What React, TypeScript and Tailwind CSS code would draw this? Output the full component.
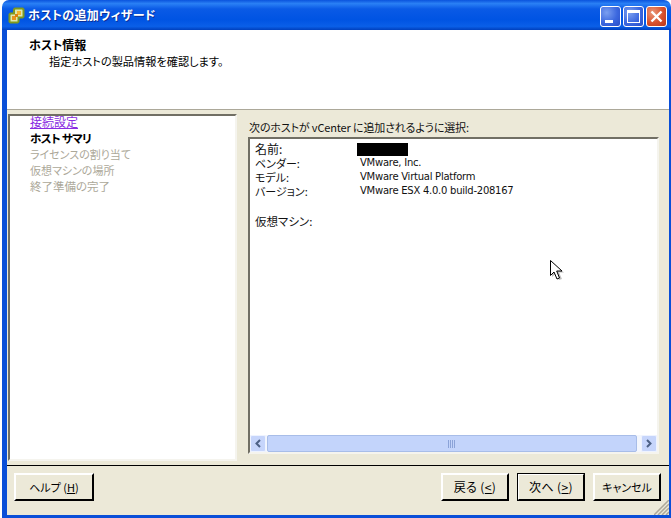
import React from "react";

const jp = "font-['Tahoma','Noto_Sans_CJK_JP',sans-serif] [font-feature-settings:'palt']";

function WinBtn({ kind }: { kind: "min" | "max" | "close" }) {
  const bg =
    kind === "close"
      ? "bg-[radial-gradient(circle_at_30%_30%,#e9987a,#d9512c_55%,#b8361a)]"
      : "bg-[radial-gradient(circle_at_30%_30%,#7b9ff0,#3c68df_55%,#2a4fc8)]";
  return (
    <div className={`w-[21px] h-[21px] rounded-[3px] border border-white flex items-center justify-center ${bg}`}>
      {kind === "min" && <div className="w-[8px] h-[3px] bg-white mt-[9px] mr-[4px]" />}
      {kind === "max" && <div className="w-[13px] h-[13px] border border-white border-t-[3px]" />}
      {kind === "close" && (
        <svg width="13" height="13" viewBox="0 0 13 13">
          <path d="M1.5 1.5 11.5 11.5M11.5 1.5 1.5 11.5" stroke="#fff" strokeWidth="2.4" />
        </svg>
      )}
    </div>
  );
}

function Btn({ w, def, text = "text-[12px]", children }: { w: string; def?: boolean; text?: string; children: React.ReactNode }) {
  return (
    <div
      className={`${w} ${text} h-[28px] flex items-center justify-center bg-[#ece9d8] text-black border-t-2 border-l-2 border-t-white border-l-white border-r-2 border-b-2 border-r-black border-b-black ${
        def ? "outline outline-1 outline-black -outline-offset-1" : ""
      }`}
    >
      {children}
    </div>
  );
}

const U = ({ children }: { children: React.ReactNode }) => <span className="underline">{children}</span>;

function Row({ k, size = "text-[11px]", children }: { k: string; size?: string; children?: React.ReactNode }) {
  return (
    <div className="flex h-[14px] items-center">
      <div className={`w-[105px] ${size} leading-[14px] text-[#111]`}>{k}</div>
      <div className="text-[10px] leading-[14px] tracking-[-0.25px] font-['DejaVu_Sans',sans-serif] text-[#111]">{children}</div>
    </div>
  );
}

export default function App() {
  return (
    <div className={`w-[671px] h-[518px] overflow-hidden bg-white flex flex-col ${jp}`}>
      {/* title bar */}
      <div className="h-[30px] ml-[2px] rounded-t-[7px] bg-[linear-gradient(180deg,#0a53dd_0%,#2a80f5_12%,#0a5ae6_30%,#0054e3_65%,#0a5fe8_88%,#0040bd_100%)] flex items-center pl-[6px] pr-[4px]">
        <svg width="17" height="17" viewBox="0 0 17 17" className="shrink-0">
          <path d="M7 1.5H14.5L15.5 2.5V9.5L14.5 10.5H10.5V14.5L9.5 15.5H2.5L1.5 14.5V7.5L2.5 6.5H6V2.5Z" fill="#dfe8b0" stroke="#7f9a1e" strokeWidth="2" />
          <rect x="9" y="4" width="4" height="4" fill="#f3b52e" />
          <rect x="4" y="9" width="4" height="4" fill="#e8951c" />
          <rect x="7" y="7" width="3" height="3" fill="#d67f12" />
        </svg>
        <div className="ml-[3px] text-[12px] tracking-[0.3px] font-bold text-white [text-shadow:1px_1px_0_#0a2f9a]">ホストの追加ウィザード</div>
        <div className="ml-auto mt-[3px] flex gap-[2px]">
          <WinBtn kind="min" />
          <WinBtn kind="max" />
          <WinBtn kind="close" />
        </div>
      </div>

      {/* frame */}
      <div className="flex-1 ml-[2px] flex flex-col border-l-[5px] border-r-[2px] border-b-[3px] border-[#0a4fd8] bg-[#ece9d8] min-h-0">
        {/* header */}
        <div className="h-[80px] bg-white border-b border-[#aca899] pl-[22px] pt-[7px] text-black shrink-0">
          <div className="text-[12px] font-bold leading-[16px]">ホスト情報</div>
          <div className="text-[11.2px] leading-[16px] pl-[20px]">指定ホストの製品情報を確認します。</div>
        </div>

        {/* main */}
        <div className="flex-1 flex min-h-0 pt-[4px] pl-[1px] pr-[10px] gap-[11px]">
          {/* steps */}
          <div className="w-[229px] h-[347px] bg-white border-2 border-t-[#716f64] border-l-[#716f64] border-r-[#f5f4ee] border-b-[#f5f4ee] pl-[20px] text-[11px] leading-[16px] shrink-0">
            <div className="-mt-[2px] text-[12px] text-[#8a2be2] underline">接続設定</div>
            <div className="font-bold text-black text-[11.5px] tracking-[-0.7px]">ホスト サマリ</div>
            <div className="text-[#aca899]">ライセンスの割り当て</div>
            <div className="text-[#aca899]">仮想マシンの場所</div>
            <div className="text-[11.5px] text-[#aca899]">終了準備の完了</div>
          </div>

          {/* summary */}
          <div className="flex-1 flex flex-col min-w-0 pt-[5px]">
            <div className="h-[18px] text-[11px] tracking-[-0.15px] leading-[17px] text-[#111] pl-[1px]">次のホストが vCenter に追加されるように選択:</div>
            <div className="w-[411px] h-[317px] bg-white border-2 border-t-[#716f64] border-l-[#716f64] border-r-[#f5f4ee] border-b-[#f5f4ee] flex flex-col">
              <div className="flex-1 pl-[5px] pt-[3px]">
                <Row k="名前:" size="text-[12px]">
                  <div className="w-[51px] h-[13px] bg-black -ml-[3px]" />
                </Row>
                <Row k="ベンダー:">VMware, Inc.</Row>
                <Row k="モデル:">VMware Virtual Platform</Row>
                <Row k="バージョン:">VMware ESX 4.0.0 build-208167</Row>
                <div className="h-[16px]" />
                <Row k="仮想マシン:" size="text-[11.5px]" />
              </div>
              {/* scrollbar */}
              <div className="h-[17px] flex bg-[#f3f6fd] gap-[1px] items-stretch shrink-0">
                <div className="w-[16px] rounded-[2px] bg-[#c6d5fb] border border-[#eef3ff] flex items-center justify-center">
                  <svg width="8" height="9" viewBox="0 0 8 9"><path d="M6 1 2.5 4.5 6 8" fill="none" stroke="#4d6185" strokeWidth="2" /></svg>
                </div>
                <div className="flex-1 mr-[3px] rounded-[2px] bg-[#c3d4fb] border border-[#a8bde8] flex items-center justify-center">
                  <svg width="8" height="8" viewBox="0 0 8 8"><path d="M.5 0V8M2.5 0V8M4.5 0V8M6.5 0V8" stroke="#8ba3d8" /></svg>
                </div>
                <div className="w-[16px] rounded-[2px] bg-[#c6d5fb] border border-[#eef3ff] flex items-center justify-center">
                  <svg width="8" height="9" viewBox="0 0 8 9"><path d="M2 1 5.5 4.5 2 8" fill="none" stroke="#4d6185" strokeWidth="2" /></svg>
                </div>
              </div>
            </div>
          </div>
        </div>

        {/* footer */}
        <div className="h-[50px] shrink-0 border-t border-black flex items-start pt-[7px] pl-[7px] pr-[8px] relative">
          <Btn w="w-[80px]" text="text-[11px]">
            <span>ヘルプ (<U>H</U>)</span>
          </Btn>
          <div className="ml-auto flex gap-[8px]">
            <Btn w="w-[68px]">
              <span className="tracking-[0.4px]">戻る (<U>&lt;</U>)</span>
            </Btn>
            <Btn w="w-[68px]" def>
              <span className="tracking-[0.4px]">次へ (<U>&gt;</U>)</span>
            </Btn>
            <Btn w="w-[68px]" text="text-[11px]">キャンセル</Btn>
          </div>
          <svg width="15" height="15" viewBox="0 0 15 15" className="absolute right-0 bottom-0">
            <path d="M15 0 0 15M15 4 4 15M15 8 8 15M15 12 12 15" stroke="#aca899" strokeWidth="1.5" />
          </svg>
        </div>
      </div>

      {/* mouse cursor */}
      <svg width="18" height="24" viewBox="0 0 18 24" className="absolute left-[549px] top-[259px]">
        <path d="M3 3V18L7 14.5 10 21 13 20 10 13.5H15Z" fill="#000" opacity=".25" />
        <path d="M1.5 1.5V16.5L5 13 8 20 10.5 19 7.7 12H13Z" fill="#fff" stroke="#000" strokeWidth="1" />
      </svg>
    </div>
  );
}
